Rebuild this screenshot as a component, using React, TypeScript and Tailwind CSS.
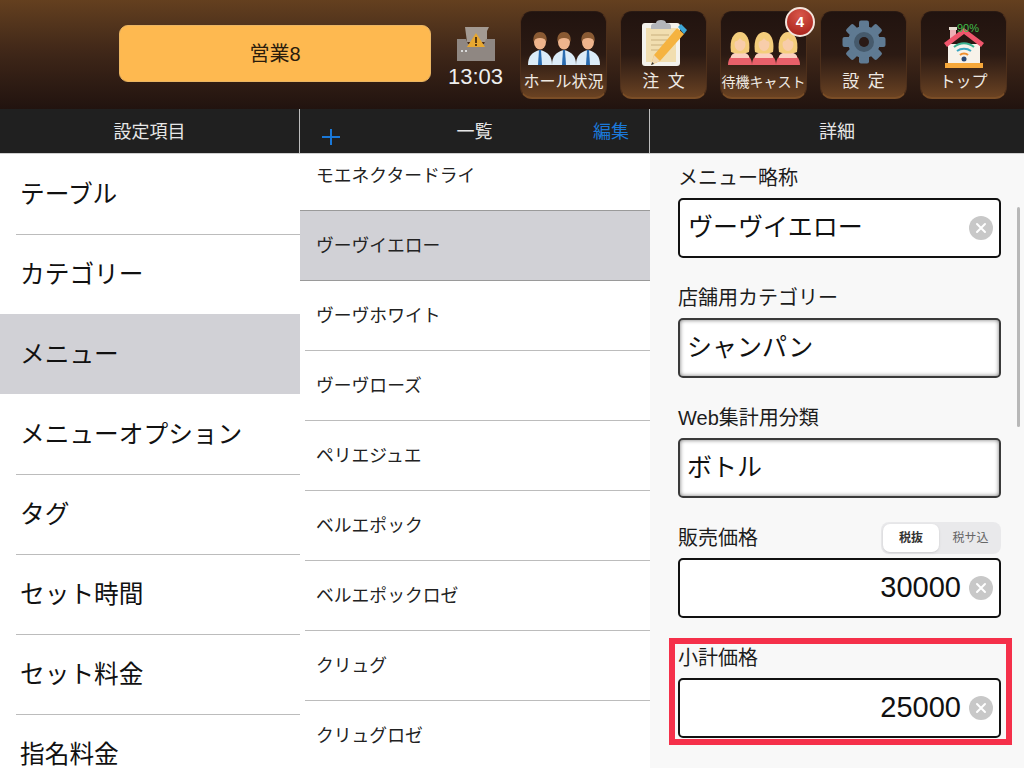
import React from "react";

const FONT = '"Liberation Sans", "Noto Sans CJK JP", sans-serif';

const leftItems = ["テーブル", "カテゴリー", "メニュー", "メニューオプション", "タグ", "セット時間", "セット料金", "指名料金"];
const midItems = ["モエネクタードライ", "ヴーヴイエロー", "ヴーヴホワイト", "ヴーヴローズ", "ペリエジュエ", "ベルエポック", "ベルエポックロゼ", "クリュグ", "クリュグロゼ"];

const Man = ({ x }: { x: number }) => (
  <g transform={`translate(${x} 0)`}>
    <path d="M0 33c0-9 4-13 12-15 8 2 12 6 12 15z" fill="#dcecf8" />
    <path d="M11 18h2l1 15h-4z" fill="#2a6cb0" />
    <ellipse cx="12" cy="10" rx="6" ry="7.500" fill="#eeb48c" />
    <path d="M5.500 10C4.500 3 8 0 12 0s7.500 3 6.500 10c-1-3-3-4-6.500-4S6.500 7 5.500 10z" fill="#8a5a33" />
  </g>
);

const Woman = ({ x }: { x: number }) => (
  <g transform={`translate(${x} 0)`}>
    <path d="M0 33c0-7 4-12 12-12s12 5 12 12z" fill="#e8606a" />
    <path d="M3 24c2-3 5-4 9-4s7 1 9 4v2H3z" fill="#fbd0c0" />
    <path d="M3 20C1 7 6 0 12 0s11 7 9 20c-5 2-13 2-18 0z" fill="#f4cd7c" />
    <ellipse cx="12" cy="12" rx="5.500" ry="7" fill="#f8cdaa" />
    <path d="M6 10c1-4 4-6 6-6s5 2 6 6c-3-1-5-2-6-4-1 2-3 3-6 4z" fill="#f4cd7c" />
  </g>
);

const HallIcon = () => (
  <svg width="74" height="33" viewBox="0 0 74 33" className="mb-[4px]">
    <Man x={1} />
    <Man x={25} />
    <Man x={49} />
  </svg>
);

const OrderIcon = () => (
  <svg width="46" height="48" viewBox="0 0 46 48" className="mb-[2px]">
    <rect x="1" y="4" width="38" height="43" rx="3" fill="#f4f2ec" />
    <rect x="5" y="9" width="30" height="34" fill="#f1deb0" />
    <path d="M10 7c0-2 2-3 5-3 0-2 2-3 5-3s5 1 5 3c3 0 5 1 5 3v3H10z" fill="#b4b6ba" />
    <path d="M10 16h18M10 21h16M10 26h14M10 31h9" stroke="#d6c08e" strokeWidth="1.500" />
    <path d="M36 9l7 6-24 27-9 4 3-10z" fill="#f5b340" />
    <path d="M37 8l3-3 6 6-3 4z" fill="#3ea8d8" />
    <path d="M13 36l6 6-9 4z" fill="#f0d8b0" />
    <path d="M11.500 43l-1.500 3 3-1z" fill="#333" />
  </svg>
);

const CastIcon = () => (
  <svg width="74" height="33" viewBox="0 0 74 33" className="mb-[4px]">
    <Woman x={1} />
    <Woman x={25} />
    <Woman x={49} />
  </svg>
);

const GearIcon = () => (
  <svg width="44" height="44" viewBox="0 0 44 44" className="mb-[5px]">
    {[0, 45, 90, 135, 180, 225, 270, 315].map((a) => (
      <rect key={a} x="17" y="0.500" width="10" height="12" rx="2" fill="#5f7a92" transform={`rotate(${a} 22 22)`} />
    ))}
    <circle cx="22" cy="22" r="16" fill="#5f7a92" />
    <circle cx="22" cy="22" r="10" fill="#465a6c" />
    <circle cx="22" cy="22" r="5" fill="#2a1a16" />
  </svg>
);

const HomeIcon = () => (
  <svg width="42" height="42" viewBox="0 0 42 42" className="mb-[1px]">
    <rect x="7" y="1" width="6" height="13" fill="#eeb0b4" />
    <rect x="6" y="1" width="8" height="3" fill="#e6dcd0" />
    <path d="M5 18h32v19H5z" fill="#f7f2ea" />
    <path d="M1 17L21 2l20 15-3 4L21 8 4 21z" fill="#f0566c" />
    <path d="M11 21c6-5 14-5 20 0" fill="none" stroke="#3bb08f" strokeWidth="2" />
    <path d="M14 25c4-3 10-3 14 0" fill="none" stroke="#3aa6c0" strokeWidth="2" />
    <path d="M17 29c2-2 6-2 8 0" fill="none" stroke="#f09030" strokeWidth="2" />
    <circle cx="21" cy="33" r="2.500" fill="#2b4a78" />
    <rect x="2" y="37" width="38" height="5" fill="#f7a83a" />
  </svg>
);

const PrinterIcon = () => (
  <svg width="38" height="36" viewBox="0 0 38 36">
    <path d="M8 1h24l-2 4v11H10z" fill="#a39a92" />
    <path d="M0 13h9l2 5h16l2-5h9v22H0z" fill="#8f8782" />
    <path d="M19 7l9 14H10z" fill="#e8a830" />
    <rect x="18" y="11" width="2" height="6" fill="#5a3a10" />
    <rect x="18" y="18" width="2" height="2" fill="#5a3a10" />
    <rect x="4" y="24" width="2" height="2" fill="#d8d8d8" />
    <rect x="8" y="24" width="2" height="2" fill="#d8d8d8" />
  </svg>
);

const HeaderButton = ({ label, icon, labelClass, badge, children }: { label: string; icon: React.ReactNode; labelClass?: string; badge?: string; children?: React.ReactNode }) => (
  <div className="relative flex h-[88px] w-[87px] shrink-0 flex-col items-center rounded-[12px] border border-b-2 border-[#2a1a14] border-b-[#7a4d26] border-x-[#4d2f1b] bg-gradient-to-b from-[#21130f] via-[#2b1a13] to-[#6a4222]">
    <div className="flex h-[57px] w-full items-end justify-center">{icon}</div>
    <span className={`mt-[3px] whitespace-nowrap leading-[20px] text-[#efe9e2] ${labelClass ?? "text-[16px]"}`}>{label}</span>
    {children}
    {badge && (
      <span className="absolute right-[-9px] top-[-5px] flex h-[30px] w-[30px] items-center justify-center rounded-full border-2 border-[#f3e4dc] bg-[radial-gradient(circle_at_50%_25%,#d9574a,#a31c16)] text-[15px] font-bold text-white">
        {badge}
      </span>
    )}
  </div>
);

const ClearIcon = () => (
  <svg width="24" height="24" viewBox="0 0 24 24" className="shrink-0">
    <circle cx="12" cy="12" r="12" fill="#c8c8c8" />
    <path d="M8 8l8 8M16 8l-8 8" stroke="#fff" strokeWidth="2" strokeLinecap="round" />
  </svg>
);

const Field = ({ label, value, right, clear, inset, indent, extra }: { label: string; value: string; right?: boolean; clear?: boolean; inset?: boolean; indent?: string; extra?: React.ReactNode }) => (
  <div className="flex h-[120px] flex-col">
    <div className="flex h-[44px] items-center justify-between pt-[4px]">
      <span className="text-[20px] leading-[28px] text-[#1c1c1c]">{label}</span>
      {extra}
    </div>
    <div className={`flex h-[60px] items-center rounded-[5px] border-2 bg-white pr-[6px] ${inset ? "border-[#3a3a3a] shadow-[inset_0_0_4px_#777]" : "border-[#111]"} ${indent ?? "pl-[8px]"}`}>
      <span className={`flex-1 whitespace-nowrap text-[#111] ${right ? "pr-[8px] text-right text-[29px]" : "text-[25px]"}`}>{value}</span>
      {clear && <ClearIcon />}
    </div>
  </div>
);

export default function App() {
  return (
    <div className="flex h-[768px] w-[1024px] flex-col overflow-hidden bg-white" style={{ fontFamily: FONT }}>
      {/* top bar */}
      <header className="flex h-[109px] shrink-0 items-start bg-gradient-to-b from-[#64401f] via-[#3e2618] to-[#21130f] pl-[119px]">
        <button className="mt-[25px] flex h-[57px] w-[312px] items-center justify-center rounded-[9px] border border-[#eab563] bg-[#feb950] text-[20px] text-[#2a1c0c]">
          営業8
        </button>
        <div className="flex w-[89px] flex-col items-center pt-[26px]">
          <PrinterIcon />
          <span className="mt-[2px] text-[22px] leading-[26px] text-[#eeeeee]">13:03</span>
        </div>
        <div className="mt-[11px] flex gap-[13px]">
          <HeaderButton label="ホール状況" icon={<HallIcon />} />
          <HeaderButton label="注 文" labelClass="text-[17px] [word-spacing:4px]" icon={<OrderIcon />} />
          <HeaderButton label="待機キャスト" labelClass="text-[14px]" badge="4" icon={<CastIcon />} />
          <HeaderButton label="設 定" labelClass="text-[17px] [word-spacing:4px]" icon={<GearIcon />} />
          <HeaderButton label="トップ" icon={<HomeIcon />}>
            <span className="absolute left-[36px] top-[10px] text-[11px] leading-[12px] text-[#3fbf4a]">90%</span>
          </HeaderButton>
        </div>
      </header>

      {/* column titles */}
      <div className="flex h-[45px] shrink-0 border-b border-[#cfcfcf] bg-[#202020] text-[18px] text-[#e6e6e6]">
        <div className="flex w-[300px] items-center justify-center border-r border-[#bdbdbd] pt-[3px]">設定項目</div>
        <div className="relative flex w-[350px] items-center justify-center border-r border-[#bdbdbd] pt-[3px]">
          <span>一覧</span>
          <svg width="18" height="16" viewBox="0 0 18 16" className="absolute left-[22px] top-[20px]">
            <path d="M9 0v16M0 8h18" stroke="#1a78d8" strokeWidth="2" />
          </svg>
          <span className="absolute right-[20px] text-[#1b78d8]">編集</span>
        </div>
        <div className="flex flex-1 items-center justify-center pt-[3px]">詳細</div>
      </div>

      <div className="flex min-h-0 flex-1">
        {/* settings list */}
        <ul className="w-[300px] shrink-0 overflow-hidden bg-white">
          {leftItems.map((item, i) => {
            const selected = item === "メニュー";
            const noLine = i === 0 || selected || leftItems[i - 1] === "メニュー";
            return (
              <li key={item} className={selected ? "bg-[#d1d1d6]" : ""}>
                <div className={`ml-[16px] flex h-[80px] items-center pl-[4px] pt-[1px] text-[24.7px] text-[#111] ${noLine ? "" : "border-t border-[#bcbcbc]"}`}>
                  {item}
                </div>
              </li>
            );
          })}
        </ul>

        {/* menu list */}
        <div className="w-[350px] shrink-0 overflow-hidden bg-white">
          <ul className="mt-[-13px]">
            {midItems.map((item, i) => {
              const selected = item === "ヴーヴイエロー";
              return (
                <li
                  key={item}
                  className={`flex items-center pt-[1px] text-[17.8px] text-[#222] ${
                    selected
                      ? "h-[71px] border-y border-[#9a9a9a] bg-[#d1d1d6] pl-[16px]"
                      : i === 0
                        ? "ml-[5px] h-[69px] pl-[11px]"
                        : "ml-[5px] h-[70px] border-b border-[#bcbcbc] pl-[11px]"
                  }`}
                >
                  {item}
                </li>
              );
            })}
          </ul>
        </div>

        {/* detail form */}
        <div className="relative flex-1 overflow-hidden bg-[#f8f8f8] pl-[28px] pr-[23px]">
          <Field label="メニュー略称" value="ヴーヴイエロー" clear />
          <Field label="店舗用カテゴリー" value="シャンパン" inset indent="pl-[7px]" />
          <Field label="Web集計用分類" value="ボトル" inset indent="pl-[7px]" />
          <Field
            label="販売価格"
            value="30000"
            right
            clear
            extra={
              <div className="flex h-[32px] w-[120px] items-center rounded-[8px] bg-[#e9e9eb] p-[2px] text-[12px]">
                <span className="flex h-[28px] w-[56px] items-center justify-center rounded-[7px] bg-white font-bold text-[#333] shadow-sm">税抜</span>
                <span className="flex-1 pl-[3px] text-center text-[#666]">税サ込</span>
              </div>
            }
          />
          <Field label="小計価格" value="25000" right clear />
          {/* red highlight */}
          <div className="absolute left-[19px] top-[484px] h-[107px] w-[343px] border-[6px] border-[#f5304a]" />
          {/* scroll bar */}
          <div className="absolute right-[4px] top-[53px] h-[220px] w-[3px] rounded-full bg-[#b8b8b8]" />
        </div>
      </div>
    </div>
  );
}
